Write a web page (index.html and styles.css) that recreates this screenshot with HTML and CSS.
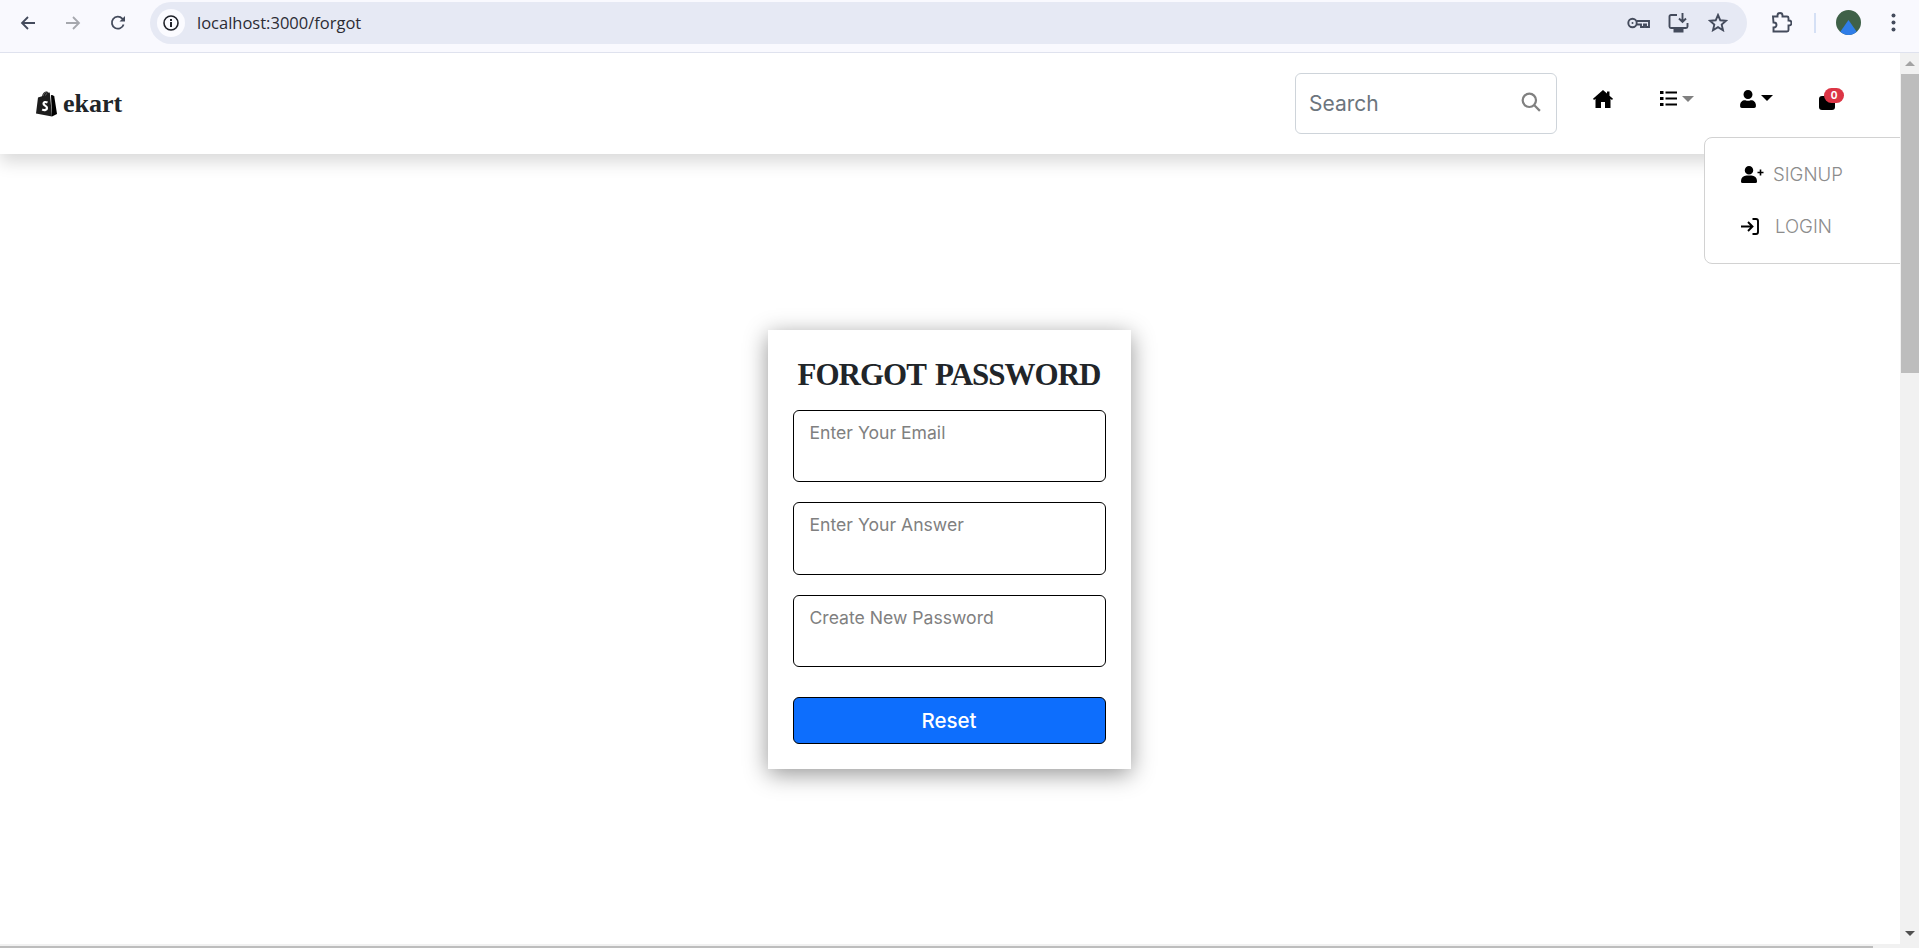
FILE: index.html
```html
<!DOCTYPE html>
<html lang="en">
<head>
<meta charset="utf-8">
<title>ekart</title>
<link rel="stylesheet" href="styles.css">
</head>
<body>
<header class="browser">
  <svg class="b-icon back" viewBox="0 0 16 16"><path d="M15 8H2M8 2 2 8l6 6"/></svg>
  <svg class="b-icon fwd" viewBox="0 0 16 16"><path d="M1 8h13M8 2l6 6-6 6"/></svg>
  <svg class="b-icon reload" viewBox="0 0 16 16"><path d="M13.600 9.500A6 6 0 1 1 12.300 3.600L14 5.400"/><path class="fill" d="M15 1v5.500H9.500z"/></svg>
  <div class="omnibox">
    <span class="info"><svg viewBox="0 0 16 16"><circle class="ring" cx="8" cy="8" r="7"/><path class="fill-dark" d="M7 7h2v5H7zM7 4h2v2H7z"/></svg></span>
    <span class="url">localhost:3000/forgot</span>
    <svg class="o-icon key" viewBox="0 0 23 12"><circle cx="5.500" cy="6" r="4.200"/><circle class="key-hole" cx="5.500" cy="6" r="1"/><path d="M9.700 4H22v6h-3V7.500h-2V10h-3V7.500H9.700"/></svg>
    <svg class="o-icon cast" viewBox="0 0 21 20"><path d="M9 2H3A1.500 1.500 0 0 0 1.500 3.500v10A1.500 1.500 0 0 0 3 15h15a1.500 1.500 0 0 0 1.500-1.500V10M14.500 0v8M11 5.500 14.500 9 18 5.500"/><path class="cast-stand" d="M5.500 16h10v3.500h-10z"/></svg>
    <svg class="o-icon star" viewBox="0 0 20 19"><path d="M10 2l2.300 5.300 5.700.5-4.300 3.800 1.300 5.600-5-3-5 3 1.300-5.600L2 7.800l5.700-.5z"/></svg>
  </div>
  <svg class="o-icon puzzle" viewBox="0 0 21 21"><path d="M2 4.500h4.500V3.500a2.500 2.500 0 0 1 5 0v1H16a1.500 1.500 0 0 1 1.500 1.500v2.500h.5a2.500 2.500 0 0 1 0 5h-.5V18a1.500 1.500 0 0 1-1.500 1.500H2.500v-4h.5a2.500 2.500 0 0 0 0-5h-.5z"/></svg>
  <span class="divider"></span>
  <span class="avatar"><svg viewBox="0 0 25 25"><path class="peak" d="M12.500 10 23 25H2z"/></svg></span>
  <svg class="dots" viewBox="0 0 5 19"><circle cx="2.500" cy="2.500" r="2"/><circle cx="2.500" cy="9.500" r="2"/><circle cx="2.500" cy="16.500" r="2"/></svg>
</header>

<div class="viewport">
  <div class="content">
    <nav class="navbar">
      <a class="brand">
        <svg class="bag-logo" viewBox="0 0 22 26">
          <path class="bag-left" d="M1 22.500 3 6.500l4-1.300C7.500 2.500 9.500.5 11.500.5c1 0 1.700.6 2 1.300l1.300-.4L17 25.500z"/>
          <path class="bag-right" d="M16 4l2 .2 1.300 1.300L22 23l-5 2.500z"/>
          <path class="bag-s" d="M12.500 11.500c-2-1-4-.4-4 1.200 0 1.800 3.500 2 3.500 4.300 0 2-2.500 2.600-4.800 1.400"/>
          <path class="bag-strap" d="M8 5c.5-2 2-3.800 3.500-3.800M10.500 4.500c.3-1 1-2.300 2-2.800"/>
        </svg>
        <span class="brand-name">ekart</span>
      </a>
      <form class="search">
        <input class="search-input" type="text" placeholder="Search">
        <svg class="search-icon" viewBox="0 0 18 18"><circle cx="7.500" cy="7.500" r="6"/><path d="M12 12l5 5"/></svg>
      </form>
      <ul class="nav-items">
        <li class="nav-home"><svg class="i-home" viewBox="0 0 20 18"><path d="M10 0 0 8.800l1 1.200 1.500-1.300V18h5.500v-6h4v6h5.500V8.700L19 10l1-1.200L16.500 5.700V1.500h-2.500v2z"/></svg></li>
        <li class="nav-list"><svg class="i-list" viewBox="0 0 17 15"><path d="M0 0h3.500v3H0zM0 6h3.500v3H0zM0 12h3.500v3H0zM5.500.500H17v2H5.500zM5.500 6.500H17v2H5.500zM5.500 12.500H17v2H5.500z"/></svg><span class="caret caret-grey"></span></li>
        <li class="nav-user"><svg class="i-user" viewBox="0 0 448 512"><path d="M224 256c70.700 0 128-57.300 128-128S294.700 0 224 0 96 57.300 96 128s57.300 128 128 128zm89.600 32h-16.700c-22.200 10.200-46.900 16-72.900 16s-50.600-5.800-72.900-16h-16.700C60.200 288 0 348.200 0 422.400V464c0 26.500 21.500 48 48 48h352c26.500 0 48-21.500 48-48v-41.600c0-74.200-60.200-134.400-134.400-134.400z"/></svg><span class="caret"></span></li>
        <li class="nav-cart"><svg class="i-cart" viewBox="0 0 16 14"><rect y="0" width="16" height="14" rx="3"/></svg><span class="badge">0</span></li>
      </ul>
    </nav>

    <div class="dropdown">
      <a class="drop-item"><svg class="i-signup" viewBox="0 0 23 17"><path d="M8 8.500a4.250 4.250 0 1 0 0-8.500 4.250 4.250 0 0 0 0 8.500zM10.500 9.500h-5A5.500 5.500 0 0 0 0 15v.5A1.500 1.500 0 0 0 1.500 17h13a1.500 1.500 0 0 0 1.500-1.500V15a5.500 5.500 0 0 0-5.500-5.500z"/><path class="plus" d="M19.500 3.500v6M16.500 6.500h6"/></svg><span class="drop-text">SIGNUP</span></a>
      <a class="drop-item drop-login"><svg class="i-login" viewBox="0 0 18 17"><path d="M0 8.500h11M7 4l4.500 4.500L7 13M11.500 1H15a2 2 0 0 1 2 2v11a2 2 0 0 1-2 2h-3.500"/></svg><span class="drop-text">LOGIN</span></a>
    </div>

    <main class="page">
      <form class="card">
        <h4 class="card-title">FORGOT PASSWORD</h4>
        <input class="field" type="email" placeholder="Enter Your Email">
        <input class="field field-tall" type="text" placeholder="Enter Your Answer">
        <input class="field" type="password" placeholder="Create New Password">
        <button class="reset" type="button">Reset</button>
      </form>
    </main>
  </div>
  <aside class="vscroll">
    <span class="arrow arrow-up"></span>
    <span class="vthumb"></span>
    <span class="arrow arrow-down"></span>
  </aside>
</div>
<div class="hscroll"><span class="hthumb"></span></div>
</body>
</html>
```

FILE: styles.css
```css
* { box-sizing: border-box; }
html, body { margin: 0; height: 948px; overflow: hidden; }
body {
  display: flex;
  flex-direction: column;
  background: #fff;
  font-family: Inter, "Open Sans", sans-serif;
  color: #212529;
}

/* browser toolbar */
.browser {
  flex: none;
  height: 53px;
  display: flex;
  align-items: center;
  padding: 0 0 7px 20px;
  background: #f9f9fe;
  border-bottom: 1px solid #dfe2ee;
}
.b-icon { width: 16px; height: 16px; fill: none; stroke: #444b5c; stroke-width: 1.800; flex: none; }
.b-icon .fill { fill: #444b5c; stroke: none; }
.fwd { stroke: #a6a8ae; margin-left: 29px; }
.reload { margin-left: 29px; }
.omnibox {
  flex: none;
  width: 1597px;
  height: 42px;
  margin-left: 24px;
  padding: 0 19px 0 7px;
  display: flex;
  align-items: center;
  border-radius: 21px;
  background: #e6e9f4;
}
.info {
  width: 28px; height: 28px;
  display: flex; align-items: center; justify-content: center;
  border-radius: 50%;
  background: #fbfbff;
}
.info svg { width: 16px; height: 16px; }
.ring { fill: none; stroke: #20222a; stroke-width: 1.600; }
.fill-dark { fill: #20222a; }
.url {
  margin-left: 12px;
  margin-right: auto;
  font: 400 16.500px "Open Sans", sans-serif;
  color: #2c2c34;
}
.o-icon { fill: none; stroke: #444b5c; stroke-width: 1.900; flex: none; }
.key { width: 23px; height: 12px; }
.key-hole { fill: #444b5c; stroke: none; }
.cast { width: 21px; height: 20px; margin-left: 18px; }
.cast-stand { fill: #444b5c; stroke: none; }
.star { width: 20px; height: 19px; margin-left: 19px; }
.puzzle { width: 21px; height: 21px; margin-left: 24px; }
.divider { width: 2px; height: 20px; margin-left: 22px; background: #d5e0f5; }
.avatar {
  width: 25px; height: 25px;
  margin-left: 20px;
  border-radius: 50%;
  overflow: hidden;
  background: #3f6148;
}
.avatar svg { display: block; width: 25px; height: 25px; }
.peak { fill: #2f7de8; }
.dots { width: 5px; height: 19px; margin-left: 30px; fill: #444b5c; }

/* page frame */
.viewport { flex: 1; min-height: 0; display: flex; }
.content { position: relative; flex: 1; min-width: 0; overflow: hidden; }

/* navbar */
.navbar {
  position: relative;
  height: 101px;
  display: flex;
  align-items: center;
  padding: 0 0 0 35px;
  background: #fff;
  box-shadow: 0 8px 16px rgba(0, 0, 0, .15);
}
.brand { display: flex; align-items: center; margin-right: auto; }
.bag-logo { width: 22px; height: 26px; }
.bag-left { fill: #1d1d1d; }
.bag-right { fill: #000; }
.bag-s { fill: none; stroke: #fff; stroke-width: 2.200; }
.bag-strap { fill: none; stroke: #777; stroke-width: .7; }
.brand-name {
  margin-left: 6px;
  font: 700 26px "Liberation Serif", serif;
  color: #212529;
}
.search { position: relative; width: 262px; height: 61px; }
.search-input {
  width: 100%;
  height: 100%;
  padding: 0 45px 0 13px;
  border: 1px solid #ced4da;
  border-radius: 6px;
  font: 400 21px Inter, sans-serif;
  outline: 0;
}
.search-input::placeholder { color: #6c757d; opacity: 1; }
.search-icon {
  position: absolute;
  right: 16px; top: 19px;
  width: 20px; height: 20px;
  fill: none; stroke: #808080; stroke-width: 2;
}
.nav-items {
  display: flex;
  align-items: flex-start;
  height: 61px;
  margin: 0 0 0 36px;
  padding: 17px 0 0;
  list-style: none;
  width: 307px;
}
.nav-items svg { display: block; fill: #000; flex: none; }
.nav-items li { display: flex; align-items: flex-start; }
.i-home { width: 20px; height: 18px; }
.nav-list { margin-left: 47px; padding-top: 1px; }
.i-list { width: 17px; height: 15px; }
.nav-user { margin-left: 46px; padding-top: 0; }
.i-user { width: 16px; height: 18px; }
.caret {
  width: 0; height: 0;
  margin: 5px 0 0 5px;
  border-style: solid;
  border-width: 6px 6px 0;
  border-color: #000 transparent transparent;
}
.caret-grey { border-top-color: #808080; }
.nav-user .caret { margin-left: 5px; }
.nav-cart { position: relative; margin-left: 46px; padding-top: 6px; }
.i-cart { width: 16px; height: 14px; }
.badge {
  position: absolute;
  left: 5px; top: -2px;
  width: 20px; height: 15px;
  border-radius: 8px;
  background: #dc3545;
  color: #fff;
  font: 700 10px/15px Inter, sans-serif;
  text-align: center;
}

/* dropdown */
.dropdown {
  position: absolute;
  top: 84px;
  left: 1704px;
  width: 220px;
  height: 127px;
  padding: 19px 0 0 36px;
  background: #fff;
  border: 1px solid #d2d2d2;
  border-radius: 8px;
}
.drop-item { display: flex; align-items: center; height: 34px; }
.drop-login { margin-top: 18px; }
.i-signup { width: 23px; height: 17px; fill: #000; }
.plus { fill: none; stroke: #000; stroke-width: 1.600; }
.i-login { width: 18px; height: 17px; fill: none; stroke: #000; stroke-width: 1.900; }
.drop-text { margin-left: 9px; font: 300 18.600px Inter, sans-serif; color: #8c8c8c; }
.drop-login .drop-text { margin-left: 16px; }

/* form card */
.page { display: flex; justify-content: center; padding: 176px 2px 0 0; }
.card {
  width: 363px;
  height: 439px;
  padding: 29px 25px 0;
  background: #fff;
  box-shadow: 0 5px 22px rgba(0, 0, 0, .42);
  display: flex;
  flex-direction: column;
}
.card-title {
  margin: 0;
  height: 51px;
  text-align: center;
  font: 700 31px/32px "Liberation Serif", serif;
  letter-spacing: -1px;
  word-spacing: 3px;
  color: #212529;
  white-space: nowrap;
}
.field {
  width: 100%;
  height: 72px;
  flex: none;
  margin-bottom: 20px;
  padding: 0 16px 28px;
  border: 1px solid #000;
  border-radius: 6px;
  background: #fff;
  font: 400 17.600px Inter, sans-serif;
  outline: 0;
}
.field-tall { height: 73px; }
.field::placeholder { color: #808080; opacity: 1; }
.reset {
  width: 100%;
  height: 47px;
  margin-top: 10px;
  border: 1px solid #000;
  border-radius: 6px;
  background: #0d6efd;
  color: #fff;
  font: 500 20.500px Inter, sans-serif;
}

/* scrollbars */
.vscroll {
  flex: none;
  width: 19px;
  display: flex;
  flex-direction: column;
  background: #f1f1f1;
}
.arrow { flex: none; height: 21px; display: flex; align-items: center; justify-content: center; }
.arrow::before {
  content: "";
  width: 0; height: 0;
  border-style: solid;
  border-color: transparent;
}
.arrow-up::before { border-width: 0 5px 5px; border-bottom-color: #a3a3a3; }
.arrow-down { margin-top: auto; }
.arrow-down::before { border-width: 5px 5px 0; border-top-color: #505050; }
.vthumb { flex: none; height: 299px; margin-left: 1px; background: #bdbdbd; }
.hscroll { flex: none; height: 4px; background: #f1f1f1; padding-top: 2px; }
.hthumb { display: block; width: 1873px; height: 2px; background: #bdbdbd; }
```
